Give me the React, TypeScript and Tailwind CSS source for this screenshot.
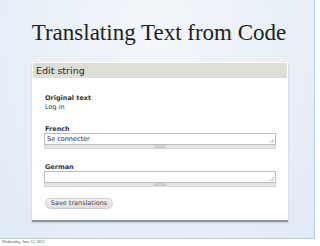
import React from "react";

function Field({ label, value }: { label: string; value?: string }) {
  return (
    <div className="flex flex-col">
      <div className="h-[8px] text-[6.5px] leading-[8px] font-bold text-[#333]">{label}</div>
      <div className="ml-[-1px] w-[232px] h-[12px] border border-[#bdbdbd] bg-white relative">
        <span className="absolute left-[2px] top-[1px] text-[6.5px] leading-[8px] text-[#222]">{value}</span>
        <svg className="absolute right-[1px] bottom-[1px]" width="4" height="4" viewBox="0 0 4 4">
          <path d="M4 0 L0 4 M4 2 L2 4" stroke="#999" strokeWidth="0.7" />
        </svg>
      </div>
      <div className="ml-[-1px] w-[232px] h-[4px] bg-[#e6e6e6] border border-t-0 border-[#d4d4d4] flex justify-center">
        <div className="w-[12px] h-[3px] bg-[#d0d0d0]" />
      </div>
    </div>
  );
}

export default function App() {
  return (
    <div
      className="w-[320px] h-[246px] bg-white flex flex-col overflow-hidden"
      style={{ fontFamily: '"DejaVu Sans", "Liberation Sans", sans-serif' }}
    >
      <div className="w-[315px] h-[239px] border-r border-b border-[#b9cde3] bg-[radial-gradient(ellipse_at_50%_15%,#f4f7fb_0%,#e9f0f8_55%,#e1ebf6_100%)] flex flex-col">
        <div
          className="h-[62px] flex items-start justify-center pt-[19px] pl-[4px] text-[23px] leading-[28px] text-[#1e1e1e]"
          style={{ fontFamily: '"Liberation Serif", serif' }}
        >
          Translating Text from Code
        </div>
        <div className="ml-[32px] w-[256px] h-[160px] bg-white border-b-2 border-[#8e9398] shadow-[0_1px_2px_rgba(0,0,0,0.15)] p-[1px] flex flex-col">
          <div className="h-[15px] bg-[#deddd6] pl-[3px] text-[9.5px] leading-[15px] text-[#2a2a2a]">Edit string</div>
          <div className="pl-[12px] pt-[16px] flex flex-col">
            <div className="h-[8px] text-[6.5px] leading-[8px] font-bold text-[#333]">Original text</div>
            <div className="h-[9px] mt-[1px] text-[6.5px] leading-[9px] text-[#333]">Log in</div>
            <div className="mt-[13px]">
              <Field label="French" value="Se connecter" />
            </div>
            <div className="mt-[14px]">
              <Field label="German" />
            </div>
            <div className="mt-[11px] w-[68px] h-[11px] rounded-full border border-[#cfcfcf] bg-gradient-to-b from-[#f4f4f4] to-[#dcdcdc] text-[6.5px] leading-[9px] text-[#444] flex items-center justify-center">
              Save translations
            </div>
          </div>
        </div>
      </div>
      <div
        className="pl-[2px] text-[4px] leading-[6px] text-[#444]"
        style={{ fontFamily: '"Liberation Serif", serif' }}
      >
        Wednesday, June 13, 2012
      </div>
    </div>
  );
}
